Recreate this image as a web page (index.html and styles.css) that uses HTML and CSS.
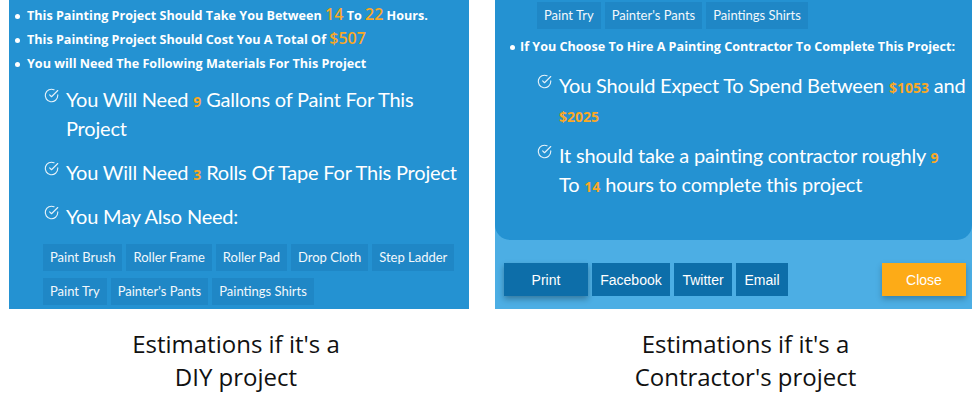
FILE: index.html
```
<!DOCTYPE html>
<html>
<head>
<meta charset="utf-8">
<link rel="stylesheet" href="styles.css">
</head>
<body>
<svg width="0" height="0" class="defs">
  <symbol id="chk" viewBox="0 0 24 24">
    <path d="M22 11.08V12a10 10 0 1 1-5.93-9.14" fill="none" stroke="currentColor" stroke-width="1.8" stroke-linecap="round" stroke-linejoin="round"/>
    <polyline points="22 4 12 14.01 9 11.01" fill="none" stroke="currentColor" stroke-width="1.8" stroke-linecap="round" stroke-linejoin="round"/>
  </symbol>
</svg>
<div class="row">
  <div class="col">
    <section class="panel diy">
      <ul class="facts">
        <li>This Painting Project Should Take You Between <span class="num">14</span> To <span class="num">22</span> Hours.</li>
        <li>This Painting Project Should Cost You A Total Of <span class="num">$507</span></li>
        <li>You will Need The Following Materials For This Project</li>
      </ul>
      <ul class="checks">
        <li><svg class="ico"><use href="#chk"/></svg><span>You Will Need <b class="n">9</b> Gallons of Paint For This Project</span></li>
        <li><svg class="ico"><use href="#chk"/></svg><span>You Will Need <b class="n">3</b> Rolls Of Tape For This Project</span></li>
        <li><svg class="ico"><use href="#chk"/></svg><span>You May Also Need:</span></li>
      </ul>
      <div class="tags">
        <span class="tag">Paint Brush</span><span class="tag">Roller Frame</span><span class="tag">Roller Pad</span><span class="tag">Drop Cloth</span><span class="tag">Step Ladder</span>
        <span class="tag">Paint Try</span><span class="tag">Painter's Pants</span><span class="tag">Paintings Shirts</span>
      </div>
    </section>
    <p class="caption">Estimations if it's a<br>DIY project</p>
  </div>
  <div class="col">
    <section class="panel pro">
      <div class="inner">
        <div class="tags">
          <span class="tag">Paint Try</span><span class="tag">Painter's Pants</span><span class="tag">Paintings Shirts</span>
        </div>
        <ul class="facts">
          <li>If You Choose To Hire A Painting Contractor To Complete This Project:</li>
        </ul>
        <ul class="checks">
          <li><svg class="ico"><use href="#chk"/></svg><span>You Should Expect To Spend Between <b class="n">$1053</b> and <b class="n">$2025</b></span></li>
          <li><svg class="ico"><use href="#chk"/></svg><span>It should take a painting contractor roughly <b class="n">9</b><br>To <b class="n">14</b> hours to complete this project</span></li>
        </ul>
      </div>
      <div class="footer">
        <button class="btn print">Print</button>
        <button class="btn fb">Facebook</button>
        <button class="btn tw">Twitter</button>
        <button class="btn em">Email</button>
        <button class="btn close">Close</button>
      </div>
    </section>
    <p class="caption right">Estimations if it's a<br>Contractor's project</p>
  </div>
</div>
</body>
</html>
```
FILE: styles.css
```
* { box-sizing: border-box; }
body {
  margin: 0;
  background: #fff;
  font-family: "Open Sans", "Noto Sans", sans-serif;
}
.defs { position: absolute; }
.row {
  display: flex;
  gap: 26px;
  padding-left: 9px;
}
.col { display: flex; flex-direction: column; }
.panel {
  height: 309px;
  overflow: hidden;
  background: #2492d2;
  color: #fff;
}
.diy { width: 460px; padding: 4px 0 0 4px; }
.pro {
  width: 477px;
  background: #4caee4;
  display: flex;
  flex-direction: column;
}
.pro .inner {
  background: #2492d2;
  height: 240px;
  border-radius: 0 0 15px 15px;
  padding: 2px 0 0 15px;
}
ul { margin: 0; padding: 0; list-style: none; }
.facts li {
  font-size: 12.6px;
  font-weight: 700;
  line-height: 24px;
  padding-left: 14px;
  position: relative;
  white-space: nowrap;
}
.facts li::before {
  content: "";
  position: absolute;
  left: 2px;
  top: 10px;
  width: 5px;
  height: 5px;
  border-radius: 50%;
  background: #fff;
}
.num {
  color: #f9a826;
  font-size: 16px;
  font-weight: 600;
  line-height: 0;
}
.checks { padding-left: 31px; margin-top: 9px; }
.checks li {
  display: flex;
  gap: 7px;
  font-family: Lato, "Open Sans", sans-serif;
  font-size: 20px;
  letter-spacing: -0.2px;
  line-height: 29px;
  margin-bottom: 15px;
  font-weight: 400;
}
.ico {
  flex: none;
  width: 15px;
  height: 15px;
  margin-top: 3px;
  color: #e6f2fa;
}
.n {
  color: #f9a826;
  font-family: "Open Sans", sans-serif;
  font-size: 14px;
  font-weight: 700;
  letter-spacing: 0;
  line-height: 0;
}
.tags {
  display: flex;
  flex-wrap: wrap;
  gap: 7px 4px;
  padding-left: 30px;
}
.tag {
  background: #1f87c6;
  font-family: Lato, "Open Sans", sans-serif;
  font-size: 13px;
  line-height: 27px;
  padding: 0 7px;
  color: #f2f8fc;
}
.diy .tags { margin-top: -2px; }
.pro .tags { padding-left: 27px; margin-bottom: 6px; }
.pro .facts li { padding-left: 10px; }
.pro .facts li::before { left: 0; }
.pro .checks { padding-left: 27px; margin-top: 12px; }
.pro .checks li { margin-bottom: 12px; }
.footer {
  display: flex;
  gap: 4px;
  padding: 23px 6px 0 9px;
}
.btn {
  border: none;
  height: 33px;
  background: #0d6ea9;
  color: #fff;
  font-family: "Liberation Sans", Arial, sans-serif;
  font-size: 14px;
  padding: 0;
}
.print { width: 84px; box-shadow: 0 3px 6px rgba(0,0,0,0.3); }
.fb { width: 78px; }
.tw { width: 58px; }
.em { width: 52px; }
.close {
  width: 84px;
  margin-left: auto;
  background: #fdab17;
  box-shadow: 0 3px 6px rgba(0,0,0,0.25);
}
.caption {
  margin: 18px 0 0;
  text-align: center;
  font-size: 24px;
  line-height: 33px;
  color: #111;
  padding-right: 6px;
}
.caption.right { padding: 0 0 0 24px; }
```
